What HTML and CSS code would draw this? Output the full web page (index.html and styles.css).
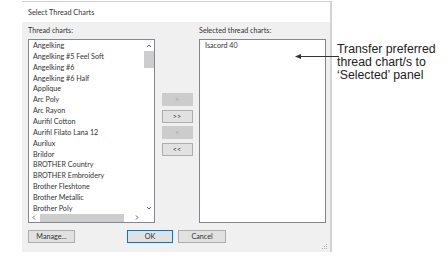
FILE: index.html
```html
<!doctype html>
<html>
<head>
  <meta charset="utf-8"/>
  <title>Select Thread Charts</title>
  <link rel="stylesheet" href="styles.css">
</head>
<body>
  <div class="page">
    <div class="dialog">
      <div class="title">Select Thread Charts</div>
      <div class="body">
        <div class="columns">
          <div class="col">
            <div class="label">Thread charts:</div>
            <div class="listbox">
              <div class="items">
                <div class="item">Angelking</div>
                <div class="item">Angelking #5 Feel Soft</div>
                <div class="item">Angelking #6</div>
                <div class="item">Angelking #6 Half</div>
                <div class="item">Applique</div>
                <div class="item">Arc Poly</div>
                <div class="item">Arc Rayon</div>
                <div class="item">Aurifil Cotton</div>
                <div class="item">Aurifil Filato Lana 12</div>
                <div class="item">Aurilux</div>
                <div class="item">Brildor</div>
                <div class="item">BROTHER Country</div>
                <div class="item">BROTHER Embroidery</div>
                <div class="item">Brother Fleshtone</div>
                <div class="item">Brother Metallic</div>
                <div class="item">Brother Poly</div>
              </div>
              <div class="vscroll">
                <svg class="arrow" width="10" height="10" viewBox="0 0 10 10"><path d="M3 6 L5 4 L7 6" fill="none" stroke="#606060" stroke-width="1"/></svg>
                <div class="vthumb"></div>
                <div class="vspace"></div>
                <svg class="arrow" width="10" height="10" viewBox="0 0 10 10"><path d="M3 4 L5 6 L7 4" fill="none" stroke="#606060" stroke-width="1"/></svg>
              </div>
              <div class="hscroll">
                <svg class="arrow" width="10" height="9" viewBox="0 0 10 9"><path d="M6 2.5 L4 4.5 L6 6.5" fill="none" stroke="#606060" stroke-width="1"/></svg>
                <div class="hthumb"></div>
                <svg class="arrow" width="10" height="9" viewBox="0 0 10 9"><path d="M4 2.5 L6 4.5 L4 6.5" fill="none" stroke="#606060" stroke-width="1"/></svg>
              </div>
              <div class="corner"></div>
            </div>
          </div>

          <div class="mid">
            <div class="btn small disabled">&gt;</div>
            <div class="btn small">&gt;&gt;</div>
            <div class="btn small disabled">&lt;</div>
            <div class="btn small">&lt;&lt;</div>
          </div>

          <div class="col">
            <div class="label">Selected thread charts:</div>
            <div class="listbox plain">
              <div class="items">
                <div class="item">Isacord 40</div>
              </div>
            </div>
          </div>
        </div>

        <div class="footer">
          <div class="btn manage">Manage...</div>
          <div class="btn ok">OK</div>
          <div class="btn cancel">Cancel</div>
        </div>
        <svg class="grip" width="5" height="5" viewBox="0 0 5 5">
          <rect x="4" y="0" width="1" height="1" fill="#b0b0b0"/>
          <rect x="2" y="2" width="1" height="1" fill="#b0b0b0"/>
          <rect x="4" y="2" width="1" height="1" fill="#b0b0b0"/>
          <rect x="0" y="4" width="1" height="1" fill="#b0b0b0"/>
          <rect x="2" y="4" width="1" height="1" fill="#b0b0b0"/>
          <rect x="4" y="4" width="1" height="1" fill="#b0b0b0"/>
        </svg>
      </div>
    </div>

    <div class="callout">
      <svg class="pointer" width="44" height="7" viewBox="0 0 44 7">
        <path d="M0 3.5 L6 1 L6 6 Z" fill="#333"/>
        <line x1="5" y1="3.5" x2="44" y2="3.5" stroke="#333" stroke-width="1"/>
      </svg>
      <div class="note">Transfer preferred<br>thread chart/s to<br>‘Selected’ panel</div>
    </div>
  </div>
</body>
</html>
```

FILE: styles.css
```css
body{
    margin: 0;
    background: #ffffff;
    font-family: Lato, "Open Sans", sans-serif;
    color: #333;
}

.page{
    position: relative;
    width: 447px;
    height: 266px;
    padding: 1px 0 0 22px;
    box-sizing: border-box;
}

.dialog{
    width: 310px;
    border-top: 1px solid #d0d0d0;
    border-right: 2px solid #d4d4d4;
    box-sizing: border-box;
}

.title{
    height: 20px;
    background: #ffffff;
    padding-left: 6px;
    font-size: 7.3px;
    line-height: 21px;
    color: #333;
}

.body{
    position: relative;
    height: 230px;
    background: #f0f0f0;
    padding: 4px 4px 0 6px;
    box-sizing: border-box;
}

.columns{
    display: flex;
}

.col{
    display: flex;
    flex-direction: column;
}

.label{
    font-size: 7.2px;
    height: 13px;
    line-height: 10px;
    color: #333;
}

.listbox{
    position: relative;
    width: 127px;
    height: 184px;
    background: #ffffff;
    border: 1px solid #828790;
    box-sizing: border-box;
    display: grid;
    grid-template-columns: 115px 10px;
    grid-template-rows: 173px 9px;
}

.listbox.plain{
    display: block;
}

.items{
    overflow: hidden;
    padding-left: 4px;
}

.plain .items{
    padding-left: 5px;
}

.item{
    height: 10.87px;
    line-height: 11px;
    font-size: 7.2px;
    white-space: nowrap;
    color: #333;
}

.vscroll{
    display: flex;
    flex-direction: column;
    align-items: center;
}

.vscroll .arrow{
    display: block;
    margin-top: 1px;
}

.vthumb{
    width: 10px;
    height: 17px;
    background: #cdcdcd;
}

.vspace{
    flex: 1;
}

.hscroll{
    display: flex;
    align-items: center;
}

.hscroll .arrow{
    display: block;
    flex: none;
}

.hthumb{
    width: 84px;
    height: 8px;
    background: #cdcdcd;
    margin: 0 8px 0 1px;
}

.corner{
    background: #ffffff;
}

.mid{
    width: 44px;
    display: flex;
    flex-direction: column;
    align-items: center;
    padding-top: 67px;
    gap: 3.5px;
}

.btn{
    height: 13px;
    box-sizing: border-box;
    border: 1px solid #adadad;
    background: #e1e1e1;
    font-size: 7.2px;
    line-height: 11px;
    text-align: center;
    color: #333;
}

.btn.small{
    width: 31px;
}

.btn.disabled{
    border-color: #cccccc;
    background: #cccccc;
    color: #a0a0a0;
}

.footer{
    display: flex;
    margin-top: 7px;
}

.manage{
    width: 47px;
}

.ok{
    width: 46px;
    margin-left: 52px;
    border-color: #0078d7;
}

.cancel{
    width: 48px;
    margin-left: 5px;
}

.grip{
    position: absolute;
    right: 3px;
    bottom: 3px;
}

.callout{
    position: absolute;
    left: 295px;
    top: 43px;
    display: flex;
    align-items: flex-start;
}

.pointer{
    margin-top: 10px;
    flex: none;
}

.note{
    font-family: "Liberation Sans", Arial, sans-serif;
    font-size: 12.3px;
    line-height: 13px;
    color: #222;
    margin-left: -2px;
}
```
